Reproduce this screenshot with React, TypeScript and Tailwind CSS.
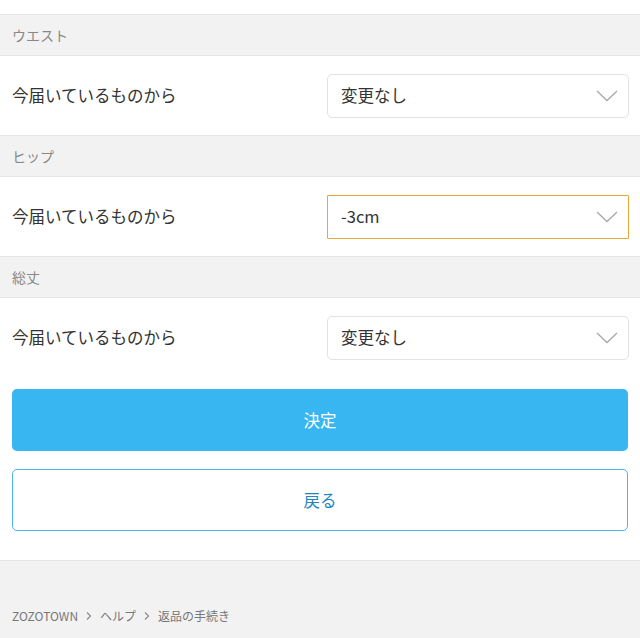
import React from "react";

const Chevron = () => (
  <svg width="22" height="12" viewBox="0 0 22 12" fill="none" className="shrink-0">
    <path d="M1 1 L11 10.5 L21 1" stroke="#a8a8a8" strokeWidth="1.3" />
  </svg>
);

function Section({ title, value, focused }: { title: string; value: string; focused?: boolean }) {
  return (
    <div>
      <div className="h-[42px] bg-[#f2f2f2] border-y border-[#e6e6e6] px-3 flex items-center text-[14px] leading-none text-[#888]">
        {title}
      </div>
      <div className="h-[79px] bg-white pl-3 pr-[11px] flex items-center justify-between">
        <span className="text-[16.5px] leading-none text-[#333] -mt-px">今届いているものから</span>
        <div
          className={
            focused
              ? "w-[302px] h-[44px] border border-[#e4a93a] rounded-[1px] pl-[13px] pr-[10px] flex items-center justify-between text-[16.5px] leading-none text-[#333]"
              : "w-[302px] h-[44px] border border-[#e2e2e2] rounded-[5px] pl-[13px] pr-[10px] flex items-center justify-between text-[16.5px] leading-none text-[#333]"
          }
        >
          <span>{value}</span>
          <Chevron />
        </div>
      </div>
    </div>
  );
}

export default function App() {
  return (
    <div
      className="w-[640px] h-[638px] bg-white overflow-hidden flex flex-col"
      style={{ fontFamily: '"Noto Sans CJK JP", "Noto Sans", sans-serif' }}
    >
      <div className="h-[14px] bg-white shrink-0" />
      <Section title="ウエスト" value="変更なし" />
      <Section title="ヒップ" value="-3cm" focused />
      <Section title="総丈" value="変更なし" />
      <div className="px-3 pt-[12px] pb-[29px] flex flex-col gap-[18px] bg-white">
        <button className="h-[62px] w-full rounded-[5px] bg-[#38b6f2] text-white text-[16.5px] leading-none">決定</button>
        <button className="h-[62px] w-full rounded-[5px] border border-[#49b6ea] bg-white text-[#1f86c2] text-[16.5px] leading-none">戻る</button>
      </div>
      <div className="flex-1 bg-[#f2f2f2] border-t border-[#e6e6e6] px-3 pt-[49px]">
        <div className="flex items-center text-[12px] leading-none text-[#777] gap-[7px]">
          <span>ZOZOTOWN</span>
          <svg width="8" height="10" viewBox="0 0 8 10" fill="none"><path d="M2 1.5 L5.5 5 L2 8.5" stroke="#888" strokeWidth="1.1" /></svg>
          <span>ヘルプ</span>
          <svg width="8" height="10" viewBox="0 0 8 10" fill="none"><path d="M2 1.5 L5.5 5 L2 8.5" stroke="#888" strokeWidth="1.1" /></svg>
          <span>返品の手続き</span>
        </div>
      </div>
    </div>
  );
}
